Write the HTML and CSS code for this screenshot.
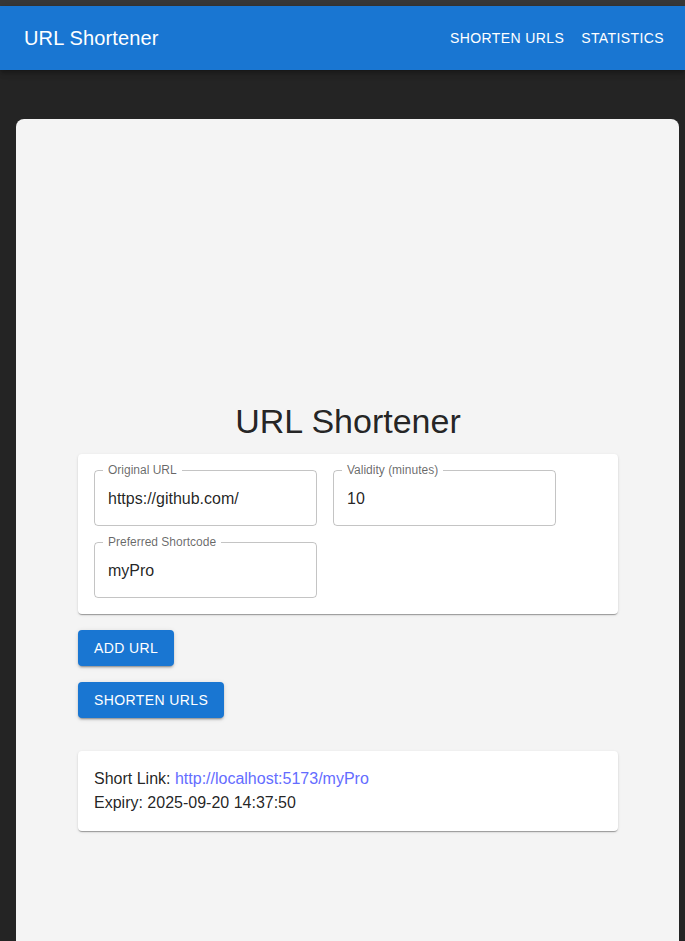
FILE: index.html
```html
<!DOCTYPE html>
<html lang="en">
<head>
<meta charset="utf-8">
<title>URL Shortener</title>
<link rel="stylesheet" href="styles.css">
</head>
<body>
  <div class="topstrip"></div>
  <header class="appbar">
    <div class="brand">URL Shortener</div>
    <nav class="nav">
      <a class="nav-btn" href="#">Shorten URLs</a>
      <a class="nav-btn" href="#">Statistics</a>
    </nav>
  </header>
  <main class="card">
    <div class="content">
      <h1 class="title">URL Shortener</h1>
      <section class="paper form">
        <div class="field">
          <span class="label">Original URL</span>
          <input class="input" type="text" value="https://github.com/">
        </div>
        <div class="field">
          <span class="label">Validity (minutes)</span>
          <input class="input" type="text" value="10">
        </div>
        <div class="field">
          <span class="label">Preferred Shortcode</span>
          <input class="input" type="text" value="myPro">
        </div>
      </section>
      <div class="actions">
        <button class="btn">Add URL</button>
        <button class="btn">Shorten URLs</button>
      </div>
      <section class="paper result">
        <div>Short Link: <a class="link" href="#">http://localhost:5173/myPro</a></div>
        <div>Expiry: 2025-09-20 14:37:50</div>
      </section>
    </div>
  </main>
</body>
</html>
```
FILE: styles.css
```css
html, body {
  margin: 0;
  padding: 0;
  overflow: hidden;
  height: 100%;
}
body {
  background: #242424;
  font-family: "Liberation Sans", Arial, sans-serif;
  color: rgba(0, 0, 0, 0.87);
}
.topstrip {
  height: 6px;
  background: #383838;
}
.appbar {
  height: 64px;
  background: #1976d2;
  color: #fff;
  display: flex;
  align-items: center;
  justify-content: space-between;
  padding: 0 13px 0 24px;
  box-shadow: 0px 2px 4px -1px rgba(0,0,0,0.2), 0px 4px 5px 0px rgba(0,0,0,0.14), 0px 1px 10px 0px rgba(0,0,0,0.12);
  position: relative;
  z-index: 1;
}
.brand {
  font-size: 20px;
  line-height: 1.6;
  letter-spacing: 0.0075em;
}
.nav {
  display: flex;
  gap: 1px;
}
.nav-btn {
  color: #fff;
  text-decoration: none;
  text-transform: uppercase;
  font-size: 14px;
  letter-spacing: 0.02857em;
  line-height: 1.75;
  padding: 6px 8px;
}
.card {
  margin: 49px 6px 0 16px;
  height: calc(100vh - 119px);
  background: #f4f4f4;
  border-radius: 8px 8px 0 0;
  padding-top: 281px;
  box-sizing: border-box;
}
.content {
  width: 540px;
  margin: 0 auto;
  padding-left: 1px;
}
.title {
  margin: 0 0 12px;
  font-size: 34px;
  font-weight: 400;
  line-height: 42px;
  text-align: center;
  color: rgba(0, 0, 0, 0.87);
}
.paper {
  background: #fff;
  border-radius: 4px;
  box-shadow: 0px 2px 1px -1px rgba(0,0,0,0.2), 0px 1px 1px 0px rgba(0,0,0,0.14), 0px 1px 3px 0px rgba(0,0,0,0.12);
}
.form {
  padding: 16px;
  display: flex;
  flex-wrap: wrap;
  gap: 16px;
}
.field {
  position: relative;
  width: 223px;
  height: 56px;
  box-sizing: border-box;
  border: 1px solid rgba(0, 0, 0, 0.23);
  border-radius: 4px;
  display: flex;
  align-items: center;
  padding: 0 13px;
}
.label {
  position: absolute;
  top: -7px;
  left: 8px;
  padding: 0 5px;
  background: #fff;
  font-size: 12px;
  line-height: 12px;
  color: rgba(0, 0, 0, 0.6);
}
.input {
  border: none;
  outline: none;
  background: transparent;
  font-family: inherit;
  font-size: 16px;
  line-height: 23px;
  padding: 0;
  width: 100%;
  color: rgba(0, 0, 0, 0.87);
}
.actions {
  display: flex;
  flex-direction: column;
  align-items: flex-start;
  gap: 16px;
  margin-top: 16px;
}
.btn {
  background: #1976d2;
  color: #fff;
  border: none;
  border-radius: 4px;
  font-family: inherit;
  font-size: 14px;
  letter-spacing: 0.02857em;
  text-transform: uppercase;
  line-height: 24px;
  padding: 6px 16px;
  box-shadow: 0px 3px 1px -2px rgba(0,0,0,0.2), 0px 2px 2px 0px rgba(0,0,0,0.14), 0px 1px 5px 0px rgba(0,0,0,0.12);
}
.result {
  margin-top: 33px;
  padding: 16px;
  font-size: 16px;
  line-height: 24px;
}
.link {
  color: #646cff;
  text-decoration: none;
}
```
